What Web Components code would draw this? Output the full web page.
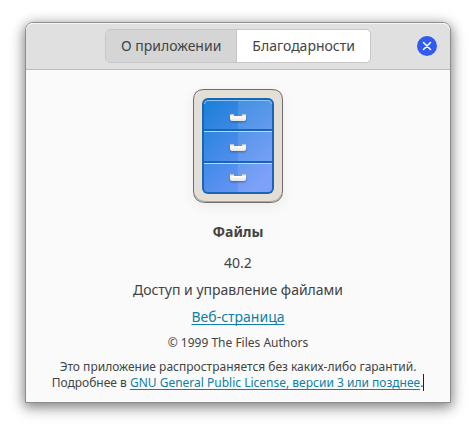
<!DOCTYPE html>
<html lang="ru">
<head>
<meta charset="utf-8">
<title>О приложении</title>
<style>
html { background: #fff; }
body {
  margin: 0;
  padding: 22px 25px 28px;
  font-family: "Noto Sans", "Open Sans", sans-serif;
  font-size: 14px;
  line-height: 20px;
  color: #434343;
  overflow: hidden;
}
</style>
</head>
<body>
<about-window>
  <view-switcher slot="header">
    <view-tab active>О приложении</view-tab>
    <view-tab>Благодарности</view-tab>
  </view-switcher>
  <close-button slot="header"></close-button>
  <about-page>
    <cabinet-icon slot="icon"></cabinet-icon>
    <span slot="name">Файлы</span>
    <span slot="version">40.2</span>
    <span slot="summary">Доступ и управление файлами</span>
    <text-link slot="website" href="#website">Веб-страница</text-link>
    <span slot="copyright">© 1999 The Files Authors</span>
    <license-note slot="license"></license-note>
  </about-page>
</about-window>
<script>
const define = (name, html, setup) => customElements.define(name, class extends HTMLElement {
  constructor() {
    super();
    const template = document.createElement('template');
    template.innerHTML = html;
    this.attachShadow({ mode: 'open' }).append(template.content.cloneNode(true));
  }
  connectedCallback() { if (setup) setup(this, this.shadowRoot); }
});

define('about-window', `
<style>
:host { display: block; border: 1px solid #8d8d8d; border-radius: 8px 8px 0 0; background: #fafafa;
  box-shadow: 0 3px 12px 1px rgba(0,0,0,.42), 0 5px 20px rgba(0,0,0,.14); }
header { display: grid; grid-template-columns: 1fr auto 1fr; align-items: center; height: 46px;
  padding: 0 13px; background: #e0e0e0; border-bottom: 1px solid #bdbdbd;
  border-radius: 7px 7px 0 0; box-shadow: inset 0 1px #f7f7f7; }
header::before { content: ""; }
</style>
<header><slot name="header"></slot></header>
<slot></slot>`);

define('view-switcher', `
<style>:host { display: flex; border: 1px solid #c6c6c6; border-radius: 5px; overflow: hidden; background: #fff; }</style>
<slot></slot>`);

define('view-tab', `
<style>
:host { display: block; }
:host([active]) { background: #d5d5d5; border-right: 1px solid #c6c6c6; }
button { display: block; margin: 0; border: 0; padding: 6px 15px; background: none; color: inherit; font: inherit; }
</style>
<button type="button"><slot></slot></button>`,
(host, root) => root.querySelector('button').setAttribute('aria-pressed', host.hasAttribute('active')));

define('close-button', `
<style>
:host { display: block; justify-self: end; }
button { display: grid; place-items: center; width: 20px; height: 20px; margin: 0; padding: 0;
  border: 0; border-radius: 50%; background: #315bef; }
svg { display: block; }
</style>
<button type="button" aria-label="Закрыть">
  <svg width="20" height="20" viewBox="0 0 20 20"><path d="M6.5 6.5l7 7M13.5 6.5l-7 7" stroke="#fff" stroke-width="1.5" stroke-linecap="round"/></svg>
</button>`);

define('about-page', `
<style>
:host { display: flex; flex-direction: column; align-items: center; padding: 18px 12px 11px; text-align: center; }
.name { margin: 16px 0 11px; font-size: 14px; line-height: 20px; font-weight: 700; }
.lines { display: grid; gap: 7px; justify-items: center; }
.small { font-size: 12px; line-height: 16px; }
.lines .small { margin-top: 1px; }
.license { margin-top: 8px; }
</style>
<slot name="icon"></slot>
<h1 class="name"><slot name="name"></slot></h1>
<div class="lines">
  <slot name="version"></slot>
  <slot name="summary"></slot>
  <slot name="website"></slot>
  <div class="small"><slot name="copyright"></slot></div>
</div>
<div class="small license"><slot name="license"></slot></div>`);

define('text-link', `
<style>
:host { display: inline; }
a { color: #0f7fa8; text-decoration: underline; text-decoration-thickness: 1px; text-underline-offset: 2px; text-decoration-skip-ink: none; }
</style>
<a><slot></slot></a>`,
(host, root) => root.querySelector('a').href = host.getAttribute('href'));

define('license-note', `
<style>
:host { display: block; }
p { margin: 0; }
.caret { border-right: 1px solid #222; }
</style>
<p>Это приложение распространяется без каких-либо гарантий.</p>
<p>Подробнее в <text-link href="#gpl">GNU General Public License, версии 3 или позднее</text-link><span class="caret">.</span></p>`);

define('cabinet-icon', `
<style>:host, svg { display: block; } svg { overflow: visible; }</style>
<svg width="92" height="118" viewBox="0 0 92 118" role="img" aria-label="Файлы">
  <defs>
    <linearGradient id="face" x1="0" y1="0" x2=".7" y2="1"><stop offset="0" stop-color="#1a7fd8"/><stop offset="1" stop-color="#6f97f7"/></linearGradient>
    <linearGradient id="grip" x1="0" y1="0" x2="0" y2="1"><stop offset="0" stop-color="#dedbd6"/><stop offset=".5" stop-color="#f9f7f5"/><stop offset="1" stop-color="#e8e4df"/></linearGradient>
    <filter id="soft" x="-50%" y="-50%" width="200%" height="200%"><feGaussianBlur stdDeviation="1"/></filter>
    <filter id="haze" x="-50%" y="-50%" width="200%" height="200%"><feGaussianBlur stdDeviation="7"/></filter>
    <g id="handle">
      <rect x="-8" y="-1" width="16" height="5" rx="2" fill="#12366f" opacity=".5" filter="url(#soft)"/>
      <path d="M-8-4h4v2h8v-2h4v5q0 2-2 2h-12q-2 0-2-2z" fill="url(#grip)"/>
      <path d="M-8-4h4v1h-4zM4-4h4v1h-4z" fill="#c8c3bb"/>
      <path d="M-7-1.5h14" stroke="#fff"/>
    </g>
  </defs>
  <rect x="1" y="5" width="90" height="113" rx="10" fill="#000" opacity=".06" filter="url(#haze)"/>
  <path d="M12 1.500H80Q90.500 1.500 90.500 12V103Q90.500 114.500 78 114.500H14Q1.500 114.500 1.500 103V12Q1.500 1.500 12 1.500Z" fill="#e3dfd6" stroke="#716d6b"/>
  <path d="M3 107Q6 113.500 14 113.500H78Q86 113.500 89 107" fill="none" stroke="#a9a49c"/>
  <rect x="10" y="10" width="72" height="96" rx="6" fill="#1966b4"/>
  <rect x="12" y="12" width="68" height="92" rx="4" fill="url(#face)"/>
  <path d="M46 12H76Q80 12 80 16V100Q80 104 76 104H46Z" fill="#fff" opacity=".1"/>
  <path d="M12.500 16Q12.500 12.500 16 12.500H76Q79.500 12.500 79.500 16" fill="none" stroke="#8bc4ef"/>
  <path d="M12 42H80M12 74H80" stroke="#1966b4" stroke-width="2"/>
  <path d="M12 43.500H80M12 75.500H80" stroke="#b0dbfc"/>
  <use href="#handle" x="46" y="30"/>
  <use href="#handle" x="46" y="60"/>
  <use href="#handle" x="46" y="90"/>
</svg>`);
</script>
</body>
</html>
